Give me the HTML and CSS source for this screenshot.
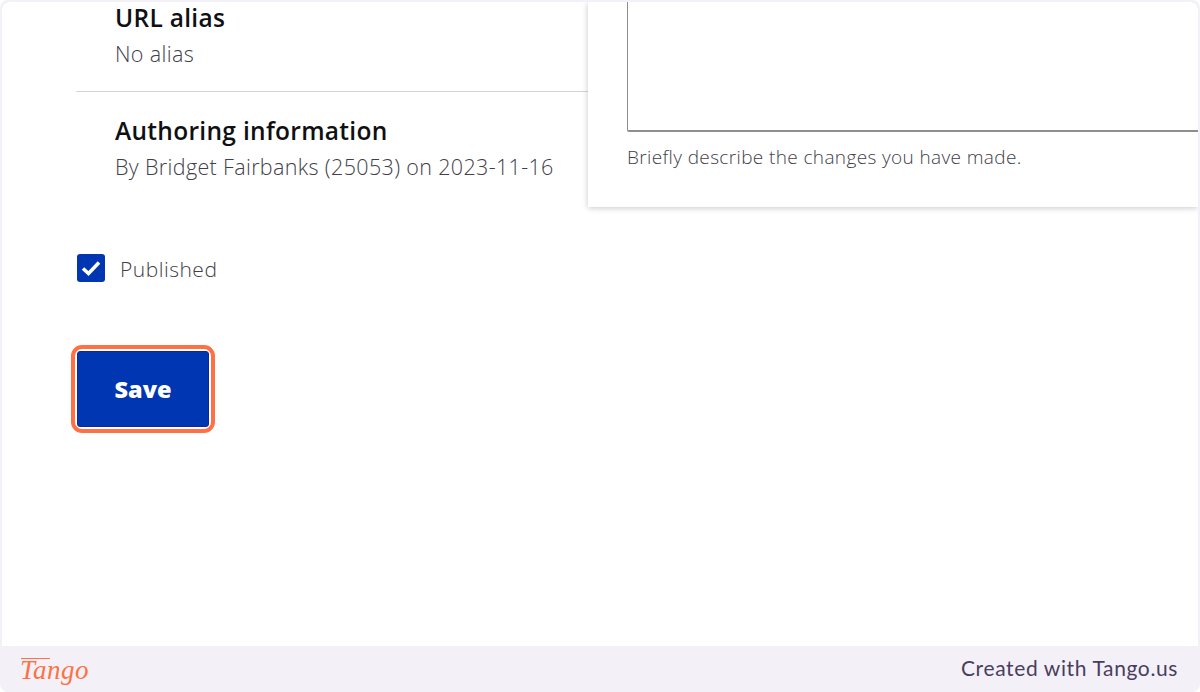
FILE: index.html
```html
<!DOCTYPE html>
<html lang="en">
<head>
    <meta charset="UTF-8">
    <title>Save</title>
    <link rel="stylesheet" href="styles.css">
</head>
<body>
    <div class="frame">
        <div class="card">
            <div class="columns">
                <div class="left-section">
                    <div class="meta-item first">
                        <div class="meta-title">URL alias</div>
                        <div class="meta-text">No alias</div>
                    </div>
                    <div class="meta-item">
                        <div class="meta-title">Authoring information</div>
                        <div class="meta-text">By Bridget Fairbanks (25053) on 2023-11-16</div>
                    </div>
                </div>
                <div class="right-section">
                    <div class="log-box"></div>
                    <div class="hint">Briefly describe the changes you have made.</div>
                </div>
            </div>
            <label class="published">
                <span class="checkbox">
                    <svg width="20" height="16" viewBox="0 0 20 16"><path d="M2 8.5 L7.5 13.5 L18 2.5" fill="none" stroke="#fff" stroke-width="3.5"/></svg>
                </span>
                <span class="published-text">Published</span>
            </label>
            <div class="save-ring">
                <button type="button" class="save-button">Save</button>
            </div>
        </div>
        <div class="footer">
            <div class="logo">Tango</div>
            <div class="created">Created with Tango.us</div>
        </div>
    </div>
</body>
</html>
```
FILE: styles.css
```css
* {
    box-sizing: border-box;
}
body {
    font-family: "Open Sans", "Liberation Sans", sans-serif;
    margin: 0;
    height: 692px;
    overflow: hidden;
    background-color: white;
}
.frame {
    height: 692px;
    background-color: #f3f1f7;
    border-radius: 8px;
    padding-top: 2px;
    display: flex;
    flex-direction: column;
}
.card {
    height: 644px;
    margin: 0 2px;
    background-color: white;
    border-radius: 8px 8px 0 0;
    overflow: hidden;
}
.columns {
    display: flex;
    height: 205px;
}
.left-section {
    width: 512px;
    margin-left: 74px;
    flex: none;
}
.meta-item {
    padding: 23px 0 0 39px;
}
.meta-item.first {
    height: 90px;
    padding-top: 0;
    border-bottom: 1px solid #d3d3db;
}
.meta-title {
    font-size: 24.5px;
    line-height: 32px;
    font-weight: 600;
    letter-spacing: 0.3px;
    color: #0f0f14;
}
.meta-text {
    font-size: 21.5px;
    font-weight: 300;
    letter-spacing: 0.35px;
    line-height: 24px;
    margin-top: 8px;
    color: #3f4048;
}
.right-section {
    flex: 1;
    padding-left: 39px;
    background-color: white;
    box-shadow: 0 1px 6px rgba(0, 0, 0, 0.22);
}
.log-box {
    height: 130px;
    margin-right: -20px;
    border-left: 1px solid #8e8e8e;
    border-bottom: 2px solid #8e8e8e;
    border-radius: 0 0 0 2px;
}
.hint {
    font-size: 19px;
    font-weight: 300;
    letter-spacing: 0.37px;
    line-height: 24px;
    margin-top: 13px;
    color: #3f4048;
}
.published {
    display: flex;
    align-items: flex-start;
    gap: 15px;
    margin: 47px 0 0 75px;
    font-size: 21px;
    font-weight: 300;
    letter-spacing: 0.5px;
    line-height: 28px;
    color: #3f4048;
}
.published-text {
    margin-top: 1px;
}
.checkbox {
    width: 28px;
    height: 28px;
    border-radius: 3px;
    background-color: #0036b1;
    display: flex;
    align-items: center;
    justify-content: center;
}
.save-ring {
    width: 144px;
    height: 88px;
    margin: 62px 0 0 69px;
    padding: 2px;
    border: 4px solid #ff7144;
    border-radius: 11px;
}
.save-button {
    display: block;
    width: 132px;
    height: 76px;
    background-color: #0036b1;
    color: white;
    border: 1px solid #0a2a8f;
    border-radius: 3px;
    font-family: "Open Sans", sans-serif;
    font-size: 23.5px;
    font-weight: 800;
    padding: 0;
}
.footer {
    flex: 1;
    display: flex;
    justify-content: space-between;
    align-items: center;
    padding: 0 22px 0 20px;
}
.logo {
    position: relative;
    font-family: "Liberation Serif", serif;
    font-style: italic;
    font-size: 27px;
    line-height: 30px;
    letter-spacing: 0.5px;
    color: #ff7144;
    margin-top: 1px;
}
.logo::before {
    content: "";
    position: absolute;
    left: 1px;
    top: 3px;
    width: 29px;
    height: 1px;
    background-color: #ff7144;
}
.created {
    font-family: "Lato", sans-serif;
    font-size: 21px;
    letter-spacing: 0.62px;
    color: #4a3d5e;
    margin-bottom: 3px;
}
```
